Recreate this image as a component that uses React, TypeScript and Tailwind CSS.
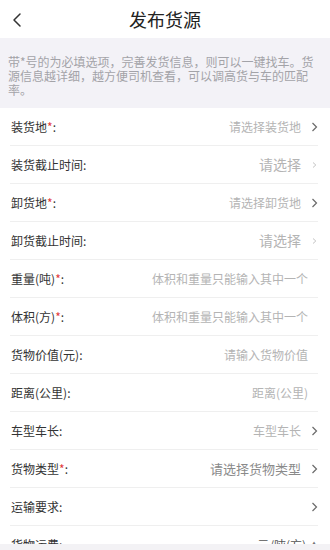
import { ChevronLeft } from "lucide-react";

type Row = {
  label: string;
  required?: boolean;
  value?: string;
  valueClass?: string;
  chevron?: "dark" | "light";
};

const rows: Row[] = [
  { label: "装货地", required: true, value: "请选择装货地", valueClass: "text-[12px] text-[#b4b4b4]", chevron: "dark" },
  { label: "装货截止时间", value: "请选择", valueClass: "text-[14px] text-[#b4b4b4]", chevron: "light" },
  { label: "卸货地", required: true, value: "请选择卸货地", valueClass: "text-[12px] text-[#b4b4b4]", chevron: "dark" },
  { label: "卸货截止时间", value: "请选择", valueClass: "text-[14px] text-[#b4b4b4]", chevron: "light" },
  { label: "重量(吨)", required: true, value: "体积和重量只能输入其中一个", valueClass: "text-[12px] text-[#b4b4b4]" },
  { label: "体积(方)", required: true, value: "体积和重量只能输入其中一个", valueClass: "text-[12px] text-[#b4b4b4]" },
  { label: "货物价值(元)", value: "请输入货物价值", valueClass: "text-[12px] text-[#b4b4b4]" },
  { label: "距离(公里)", value: "距离(公里)", valueClass: "text-[12px] text-[#b4b4b4]" },
  { label: "车型车长", value: "车型车长", valueClass: "text-[12px] text-[#b4b4b4]", chevron: "dark" },
  { label: "货物类型", required: true, value: "请选择货物类型", valueClass: "text-[13px] text-[#8a8a8a]", chevron: "dark" },
  { label: "运输要求", chevron: "dark" },
];

const Chevron = ({ tone }: { tone: "dark" | "light" }) => (
  <svg
    width="7"
    height="10"
    viewBox="0 0 7 10"
    fill="none"
    className={tone === "dark" ? "ml-[10px] text-[#6a6a6a]" : "ml-[10px] text-[#c4c4c4]"}
  >
    {tone === "dark" ? (
      <path d="M1.5 1 L5.5 5 L1.5 9" stroke="currentColor" strokeWidth="1.2" />
    ) : (
      <path d="M2 2.5 L4.8 5 L2 7.5" stroke="currentColor" strokeWidth="1" />
    )}
  </svg>
);

const App = () => {
  return (
    <div
      className="relative h-[550px] w-[330px] overflow-hidden bg-white"
      style={{ fontFamily: '"Noto Sans CJK SC", "Noto Sans", sans-serif' }}
    >
      {/* Header */}
      <div className="relative flex h-[38px] items-center justify-center bg-white">
        <ChevronLeft className="absolute left-[5px] top-[8px] h-[24px] w-[24px] text-[#333]" strokeWidth={1.5} />
        <h1 className="text-[18px] leading-none text-[#222]">发布货源</h1>
      </div>

      {/* Notice */}
      <div className="bg-[#f3f2f7] px-[8px] pb-[11px] pt-[17px] text-[12px] leading-[14px] text-[#a3a3a8]">
        带*号的为必填选项，完善发货信息，则可以一键找车。货源信息越详细，越方便司机查看，可以调高货与车的匹配率。
      </div>

      {/* Form */}
      <div className="pl-[10px] pr-[12px]">
        {rows.map((row) => (
          <div
            key={row.label}
            className="flex h-[38px] items-center justify-between border-b border-[#efefef]"
          >
            <span className="pl-[1px] text-[12px] text-[#333]">
              {row.label}
              {row.required && <span className="text-[#e23b3b]">*</span>}:
            </span>
            <div className={row.chevron ? "flex items-center" : "flex items-center pr-[10px]"}>
              {row.value && <span className={row.valueClass}>{row.value}</span>}
              {row.chevron && <Chevron tone={row.chevron} />}
            </div>
          </div>
        ))}
        <div className="flex h-[38px] items-center justify-between">
          <span className="pl-[1px] text-[12px] text-[#333]">货物运费:</span>
          <div className="flex items-center text-[12px] text-[#555]">
            元/吨(方)
            <span className="ml-[4px] text-[8px] text-[#777]">▲</span>
          </div>
        </div>
      </div>

      {/* Bottom bar */}
      <div className="absolute bottom-0 left-0 right-0 h-[6px] bg-[#f3f2f5]" />
    </div>
  );
};

export default App;
